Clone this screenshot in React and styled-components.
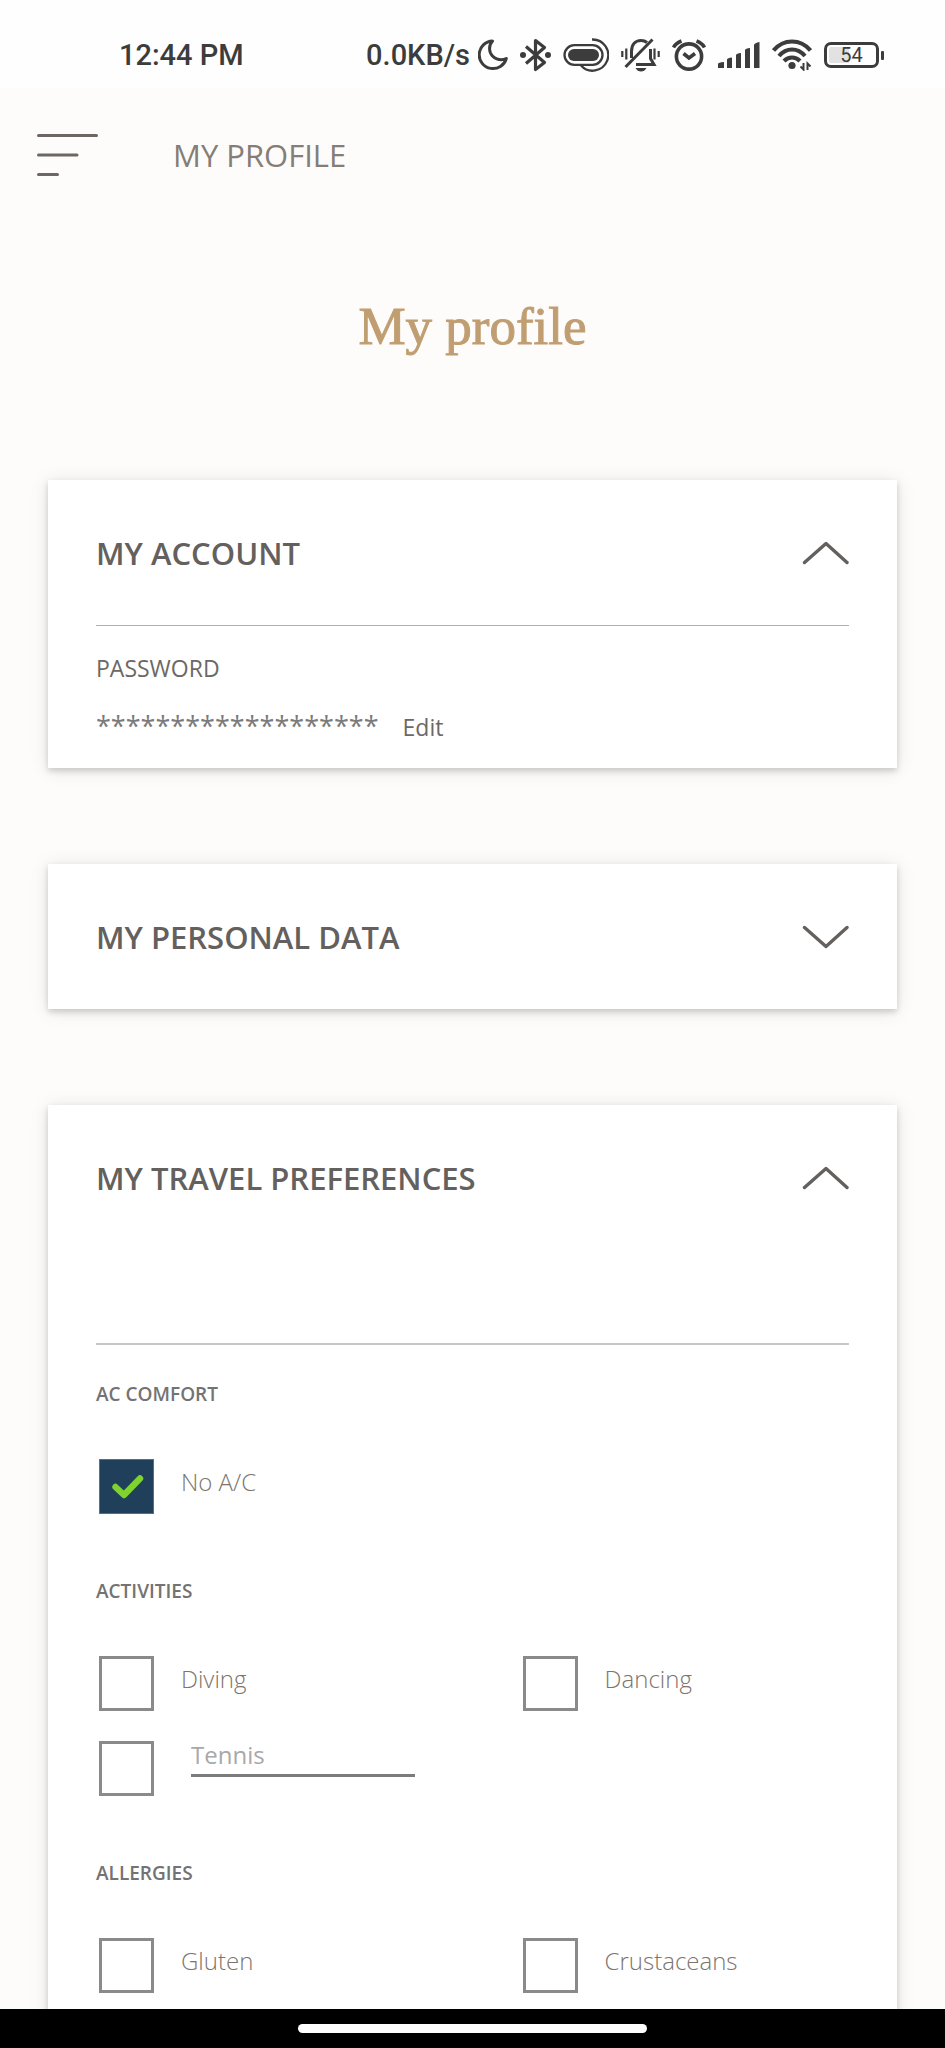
import React from "react";

import styled, { createGlobalStyle } from 'styled-components';

const GlobalStyle = createGlobalStyle`
    * {
        box-sizing: border-box;
    }

    body {
        margin: 0;
        background: #fdfcfa;
        font-family: "Open Sans", "Noto Sans", sans-serif;
    }

    button, input {
        font-family: inherit;
    }
`;

const Screen = styled.div`
    display: flex;
    flex-direction: column;
    height: 100vh;
    background: #fdfcfa;
`;

const StatusBar = styled.div`
    display: flex;
    flex-shrink: 0;
    align-items: center;
    justify-content: space-between;
    height: 88px;
    padding: 22px 61px 0 119px;
    background: #fefefe;
    color: #3c3c3c;
    font-family: Roboto, sans-serif;
    font-size: 29px;
    font-weight: 500;
    line-height: 34px;
`;

const StatusIcons = styled.div`
    display: flex;
    align-items: center;
    gap: 12px;
`;

const NetSpeed = styled.span`
    display: flex;
    align-items: center;
    gap: 8px;
`;

const Header = styled.header`
    display: flex;
    flex-shrink: 0;
    align-items: center;
    gap: 74px;
    height: 134px;
    padding: 0 36px;
`;

const MenuButton = styled.button`
    display: flex;
    padding: 0;
    border: none;
    background: none;
    color: #6e6662;
`;

const HeaderTitle = styled.span`
    color: #857d76;
    font-size: 31px;
    line-height: 40px;
`;

const Content = styled.main`
    flex: 1;
    min-height: 0;
    padding: 0 48px 96px;
    overflow-y: auto;
    scrollbar-width: none;
`;

const Title = styled.h1`
    margin: 72px 0 122px;
    color: #c09e72;
    font-family: "Liberation Serif", serif;
    font-size: 53px;
    font-weight: 400;
    line-height: 64px;
    text-align: center;
    -webkit-text-stroke: 1px #c09e72;
`;

const Cards = styled.div`
    display: flex;
    flex-direction: column;
    gap: 96px;
`;

const Card = styled.section`
    background: #fff;
    padding: 0 48px;
    box-shadow: 0 3px 6px rgba(0, 0, 0, 0.16), 0 2px 18px rgba(0, 0, 0, 0.1);
`;

const CardTitle = styled.h2`
    margin: 0;
`;

const CardButton = styled.button`
    display: flex;
    align-items: center;
    justify-content: space-between;
    width: 100%;
    height: 145px;
    padding: 0;
    border: none;
    background: none;
    color: #64605d;
    font-size: 31px;
    font-weight: 600;
    line-height: 40px;
    text-align: left;
`;

const AccountBody = styled.div`
    display: flex;
    flex-direction: column;
    gap: 26px;
    padding: 26px 0;
    border-top: 1px solid #b0b0b0;
    color: #6b6866;
    font-size: 23px;
    line-height: 32px;
`;

const PasswordRow = styled.div`
    display: flex;
    align-items: baseline;
    gap: 24px;
    height: 32px;
`;

const Stars = styled.span`
    color: #7b7b7b;
    font-size: 27px;
`;

const EditLink = styled.a`
    color: #6b6866;
    text-decoration: none;
`;

const PreferencesBody = styled.div`
    display: flex;
    flex-direction: column;
    gap: 63px;
    margin-top: 93px;
    padding: 36px 0 63px;
    border-top: 2px solid #c6c6c6;
`;

const Group = styled.fieldset`
    margin: 0;
    padding: 0;
    border: none;
`;

const GroupName = styled.legend`
    margin-bottom: 52px;
    padding: 0;
    color: #737373;
    font-size: 19px;
    font-weight: 600;
    line-height: 26px;
`;

const Options = styled.div`
    display: grid;
    grid-template-columns: 9fr 7fr;
    row-gap: 30px;
    margin-bottom: 1px;
`;

const Option = styled.div`
    display: flex;
    align-items: flex-start;
    padding-left: 3px;
`;

const OptionLabel = styled.label`
    padding: 7px 0 0 27px;
    color: #7d756d;
    font-size: 24px;
    font-weight: 300;
    line-height: 32px;
`;

const CheckStack = styled.span`
    display: grid;
    place-items: center;

    > * {
        grid-area: 1 / 1;
    }
`;

const CheckInput = styled.input`
    appearance: none;
    width: 55px;
    height: 55px;
    margin: 0;
    border: 3px solid #8a8a8a;
    background: #fff;

    &:checked {
        border: 1px solid #54708a;
        background: #1f3f5b;
    }
`;

const OtherInput = styled.input`
    width: 224px;
    height: 36px;
    margin-left: 37px;
    padding: 0 0 6px;
    border: none;
    border-bottom: 3px solid #7c7c7c;
    border-radius: 0;
    background: none;
    outline: none;
    font-size: 24px;
    line-height: 27px;

    &::placeholder {
        color: #a8a8a8;
        opacity: 1;
    }
`;

const NavBar = styled.div`
    display: flex;
    flex-shrink: 0;
    justify-content: center;
    height: 39px;
    padding-top: 15px;
    background: #000;
`;

const NavPill = styled.div`
    width: 37%;
    height: 9px;
    border-radius: 5px;
    background: #fff;
`;

const BatteryBox = styled.span`
    display: flex;
    align-items: center;
    gap: 2px;

    &::after {
        content: "";
        width: 3px;
        height: 9px;
        border-radius: 1px;
        background: #3c3c3c;
    }
`;

const BatteryLevel = styled.span`
    display: flex;
    align-items: center;
    justify-content: center;
    width: 55px;
    height: 26px;
    border: 3px solid #3c3c3c;
    border-radius: 7px;
    background: linear-gradient(90deg, #e2e2e2 45%, transparent 45%) content-box;
    padding: 2px;
    font-size: 20px;
    font-weight: 400;
    line-height: 22px;
`;

const Chevron = ({ open }) => (
    <svg width="47" height="26" viewBox="0 0 47 26" fill="none" stroke="currentColor" strokeWidth="3.4" strokeLinecap="round" strokeLinejoin="round">
        <path d={open ? "M2.5 22.5 24 3.5 45 22.5" : "M2.5 3.5 24 22.5 45 3.5"} />
    </svg>
);

const MenuIcon = () => (
    <svg width="63" height="44" viewBox="0 0 63 44" stroke="currentColor" strokeWidth="3" strokeLinecap="round">
        <path d="M2.5 2.5H60.5M2.5 22H41M2.5 41.5H21.5" />
    </svg>
);

const Tick = () => (
    <svg width="55" height="55" viewBox="0 0 55 55" fill="none" stroke="#7fd32f" strokeWidth="6.4" strokeLinecap="round" strokeLinejoin="round" pointerEvents="none">
        <path d="M16.5 28 25 36 41 19.5" />
    </svg>
);

const MoonIcon = () => (
    <svg width="30" height="32" viewBox="0 0 30 32" fill="none" stroke="currentColor" strokeWidth="3" strokeLinejoin="round">
        <path d="M14.5 2A13.8 13.8 0 1 0 28.3 19.5C22 22.5 14.5 19.5 12.3 13.5 10.8 9 11.8 5 14.5 2Z" />
    </svg>
);

const BluetoothIcon = () => (
    <svg width="31" height="34" viewBox="0 0 31 34" fill="none" stroke="currentColor" strokeWidth="3.2" strokeLinejoin="round">
        <path d="M6 8.5 24.5 24.5 15.5 31.5V2.5L24.5 9.5 6 25.5" />
        <circle cx="3" cy="17" r="3" fill="currentColor" stroke="none" />
        <circle cx="28" cy="17" r="3" fill="currentColor" stroke="none" />
    </svg>
);

const PillIcon = () => (
    <svg width="46" height="34" viewBox="0 0 46 34" fill="none" stroke="currentColor" strokeWidth="2.3">
        <rect x="1.5" y="7.2" width="38" height="19.6" rx="9.8" />
        <rect x="5" y="11" width="31" height="12" rx="6" fill="currentColor" stroke="none" />
        <path d="M29 1.5A15.6 15.6 0 1 1 18 27.5" />
    </svg>
);

const BellIcon = () => (
    <svg width="39" height="34" viewBox="0 0 39 34" fill="none" stroke="currentColor" strokeWidth="3">
        <path d="M10.5 20V13.5C10.5 7 14 2.5 20 2.5 22.5 2.5 24.5 3.2 26 4.5M29.5 11V20.5L33 26.5H15" />
        <path d="M4.5 29 31.5 1.5" />
        <path d="M1.3 13V19M5.3 10.5V21.5M33.5 10.5V21.5M37.7 13V19" strokeWidth="2.2" />
        <path d="M14.5 30H25.5Q23.5 33.5 20 33.5 16.5 33.5 14.5 30Z" fill="currentColor" stroke="none" />
    </svg>
);

const AlarmIcon = () => (
    <svg width="34" height="32" viewBox="0 0 34 32" fill="none" stroke="currentColor" strokeWidth="3.6">
        <circle cx="17" cy="17.5" r="12.6" />
        <path d="M11.5 14.5 17 19 23 14.5" />
        <path d="M1.5 8.5Q4 4 9.5 2M32.5 8.5Q30 4 24.5 2" />
    </svg>
);

const SignalIcon = () => (
    <svg width="42" height="28" viewBox="0 0 42 28" fill="currentColor">
        <path d="M0 23Q0 21.5 6 21V27H0ZM9 18.5Q9.5 17 14 16.5V27H9ZM18 14Q18.5 12.5 23 12V27H18ZM27 9Q27.5 7.5 32 7V27H27ZM36 4Q36.5 2 41.5 1V27H36Z" />
    </svg>
);

const WifiIcon = () => (
    <svg width="40" height="32" viewBox="0 0 40 32" fill="none" stroke="currentColor" strokeWidth="4.2">
        <path d="M1.5 11.5Q9 2.5 20 2.5 31 2.5 38.5 11.5" />
        <path d="M7 17Q12.5 10.5 20 10.5 27.5 10.5 33 17" />
        <path d="M12 22Q15.5 18.5 20 18.5 24.5 18.5 28 22" />
        <circle cx="20" cy="26.5" r="3.6" fill="currentColor" stroke="none" />
        <path d="M31.5 24V30.5L28.5 27.5M35.5 31V24.5L38.5 27.5" strokeWidth="2" />
    </svg>
);

const preferences = [
    { name: 'AC COMFORT', options: ['No A/C'] },
    { name: 'ACTIVITIES', options: ['Diving', 'Dancing'], other: 'Tennis' },
    { name: 'ALLERGIES', options: ['Gluten', 'Crustaceans'] },
];

const CheckBox = ({ checked, ...rest }) => (
    <CheckStack>
        <CheckInput type="checkbox" checked={checked} {...rest} />
        {checked && <Tick />}
    </CheckStack>
);

const Panel = ({ title, open, onToggle, children }) => (
    <Card>
        <CardTitle>
            <CardButton type="button" aria-expanded={open} onClick={onToggle}>
                {title}
                <Chevron open={open} />
            </CardButton>
        </CardTitle>
        {open && children}
    </Card>
);

export default class App extends React.Component {
    constructor(props) {
        super(props);
        this.state = {
            account: true,
            personal: false,
            travel: true,
            checked: { 'No A/C': true },
        };
        this.toggleOption = this.toggleOption.bind(this);
    }

    togglePanel(name) {
        this.setState({ [name]: !this.state[name] });
    }

    toggleOption(event) {
        const { name, checked } = event.target;
        this.setState({ checked: { ...this.state.checked, [name]: checked } });
    }

    renderGroup(group) {
        return (
            <Group key={group.name}>
                <GroupName>{group.name}</GroupName>
                <Options>
                    {group.options.map(option => (
                        <Option key={option}>
                            <CheckBox
                                id={option}
                                name={option}
                                checked={!!this.state.checked[option]}
                                onChange={this.toggleOption}
                            />
                            <OptionLabel htmlFor={option}>{option}</OptionLabel>
                        </Option>
                    ))}
                    {group.other && (
                        <Option>
                            <CheckBox
                                name={group.other}
                                aria-label={group.other}
                                checked={!!this.state.checked[group.other]}
                                onChange={this.toggleOption}
                            />
                            <OtherInput type="text" aria-label="Other activity" placeholder={group.other} />
                        </Option>
                    )}
                </Options>
            </Group>
        );
    }

    render() {
        return (
            <Screen>
                <GlobalStyle />
                <StatusBar>
                    <span>12:44 PM</span>
                    <StatusIcons>
                        <NetSpeed>0.0KB/s <MoonIcon /></NetSpeed>
                        <BluetoothIcon />
                        <PillIcon />
                        <BellIcon />
                        <AlarmIcon />
                        <SignalIcon />
                        <WifiIcon />
                        <BatteryBox><BatteryLevel>54</BatteryLevel></BatteryBox>
                    </StatusIcons>
                </StatusBar>
                <Header>
                    <MenuButton type="button" aria-label="Menu"><MenuIcon /></MenuButton>
                    <HeaderTitle>MY PROFILE</HeaderTitle>
                </Header>
                <Content>
                    <Title>My profile</Title>
                    <Cards>
                        <Panel title="MY ACCOUNT" open={this.state.account} onToggle={() => this.togglePanel('account')}>
                            <AccountBody>
                                <span>PASSWORD</span>
                                <PasswordRow>
                                    <Stars>*******************</Stars>
                                    <EditLink href="#edit">Edit</EditLink>
                                </PasswordRow>
                            </AccountBody>
                        </Panel>
                        <Panel title="MY PERSONAL DATA" open={this.state.personal} onToggle={() => this.togglePanel('personal')} />
                        <Panel title="MY TRAVEL PREFERENCES" open={this.state.travel} onToggle={() => this.togglePanel('travel')}>
                            <PreferencesBody>
                                {preferences.map(group => this.renderGroup(group))}
                            </PreferencesBody>
                        </Panel>
                    </Cards>
                </Content>
                <NavBar><NavPill /></NavBar>
            </Screen>
        )
    }
}
